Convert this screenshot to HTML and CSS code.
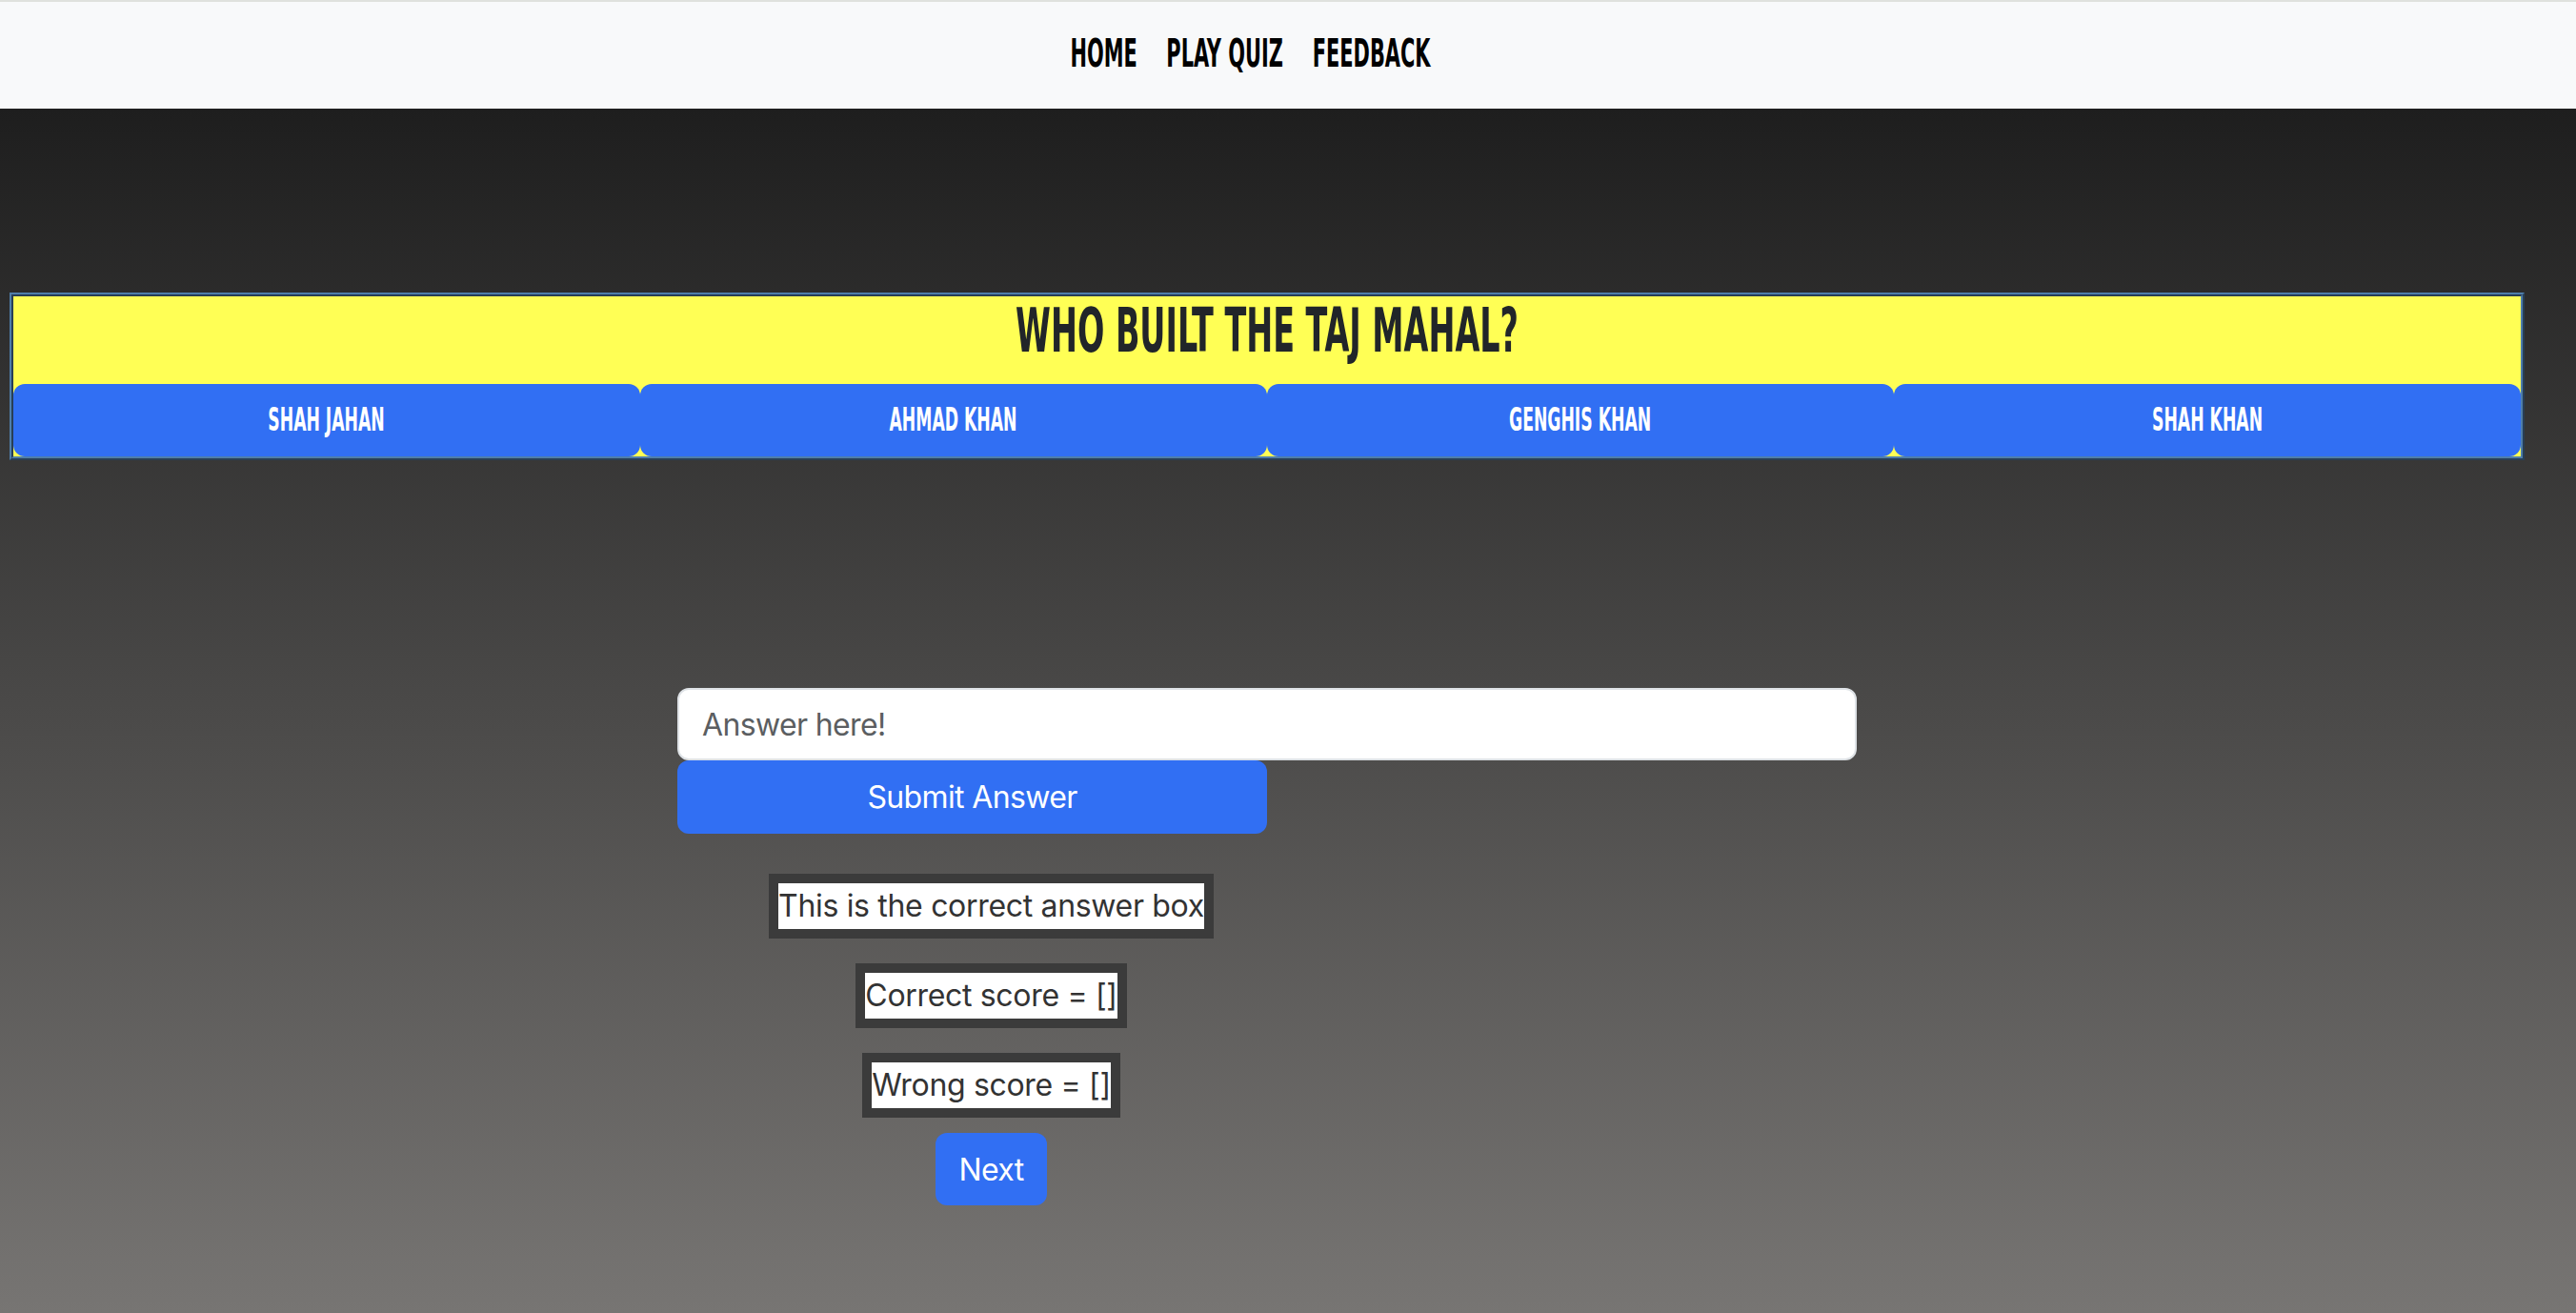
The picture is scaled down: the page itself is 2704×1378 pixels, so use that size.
FILE: index.html
```html
<!DOCTYPE html>
<html lang="en">
<head>
<meta charset="utf-8">
<title>Quiz</title>
<link rel="stylesheet" href="styles.css">
</head>
<body>
<nav class="navbar">
  <a class="nav-link nav-home" href="#"><span class="bebas">HOME</span></a>
  <a class="nav-link nav-play" href="#"><span class="bebas">PLAY QUIZ</span></a>
  <a class="nav-link nav-feedback" href="#"><span class="bebas">FEEDBACK</span></a>
</nav>
<main class="page">
  <section class="question-box">
    <h2 class="question"><span class="bebas">WHO BUILT THE TAJ MAHAL?</span></h2>
    <div class="answers">
      <button class="answer-btn"><span class="bebas">SHAH JAHAN</span></button>
      <button class="answer-btn"><span class="bebas">AHMAD KHAN</span></button>
      <button class="answer-btn"><span class="bebas">GENGHIS KHAN</span></button>
      <button class="answer-btn"><span class="bebas">SHAH KHAN</span></button>
    </div>
  </section>
  <section class="answer-form">
    <input class="answer-input" type="text" placeholder="Answer here!">
    <button class="submit-btn">Submit Answer</button>
    <div class="results">
      <div class="result-row"><span class="result-box">This is the correct answer box</span></div>
      <div class="result-row"><span class="result-box">Correct score = []</span></div>
      <div class="result-row"><span class="result-box">Wrong score = []</span></div>
      <div class="result-row"><button class="next-btn">Next</button></div>
    </div>
  </section>
</main>
</body>
</html>
```
FILE: styles.css
```css
html, body {
  margin: 0;
  padding: 0;
}
body {
  min-height: 1378px;
  background: linear-gradient(to bottom, #1d1d1d 0px, #1e1e1e 114px, #777573 1378px);
  font-family: Inter, "Noto Sans", sans-serif;
  letter-spacing: -0.02em;
  color: #212529;
}
.bebas {
  display: inline-block;
  font-family: "Liberation Sans Narrow", "DejaVu Sans Condensed", "Liberation Sans", sans-serif;
  font-weight: 700;
  letter-spacing: 0;
  white-space: nowrap;
  transform: scaleX(0.58);
  transform-origin: center;
}
.navbar {
  box-sizing: border-box;
  height: 114px;
  border-top: 2px solid #dfe1dd;
  background: #f8f9fa;
  display: flex;
  justify-content: center;
  padding-top: 35px;
  padding-right: 78px;
}
.nav-link {
  display: flex;
  justify-content: center;
  color: #000;
  text-decoration: none;
  font-size: 40px;
  line-height: 39px;
  height: 39px;
  margin: 0 17px;
}
.nav-home { width: 67px; }
.nav-play { width: 119px; }
.nav-feedback { width: 122px; }
.page {
  padding-top: 193px;
}
.question-box {
  box-sizing: border-box;
  width: 2640px;
  margin-left: 10px;
  border: 4px ridge #4f7eaa;
  background: #ffff55;
}
.question {
  box-sizing: border-box;
  height: 92px;
  margin: 0;
  padding-top: 3px;
  text-align: center;
  font-size: 64px;
  line-height: 64px;
  font-weight: 700;
  color: #212529;
}
.answers {
  display: flex;
}
.answer-btn {
  flex: 1 1 0;
  height: 76px;
  margin: 0;
  border: none;
  border-radius: 12px;
  background: #316ff3;
  color: #fff;
  font-size: 33px;
  line-height: 40px;
  display: flex;
  align-items: center;
  justify-content: center;
  padding: 0;
}
.answer-form {
  margin-left: 711px;
  margin-top: 239px;
  display: flex;
  flex-direction: column;
  align-items: flex-start;
}
.answer-input {
  box-sizing: border-box;
  width: 1238px;
  height: 76px;
  border: 2px solid #dee2e6;
  border-radius: 12px;
  background: #fff;
  padding: 0 24px;
  font-family: Inter, "Noto Sans", sans-serif;
  font-size: 32px;
  letter-spacing: -0.02em;
  color: #212529;
  outline: none;
}
.answer-input::placeholder {
  color: #5b5e61;
}
.submit-btn {
  box-sizing: border-box;
  width: 619px;
  height: 77px;
  border: none;
  border-radius: 12px;
  background: #316ff3;
  color: #fff;
  font-family: Inter, "Noto Sans", sans-serif;
  font-size: 32px;
  letter-spacing: -0.02em;
}
.results {
  width: 659px;
  margin-top: 42px;
  display: flex;
  flex-direction: column;
  align-items: center;
}
.result-row {
  display: flex;
  justify-content: center;
  margin-bottom: 26px;
}
.result-row:nth-child(3) {
  margin-bottom: 16px;
}
.result-box {
  border: 10px solid #3b3b3b;
  background: #fff;
  color: #333;
  font-size: 32px;
  line-height: 48px;
  white-space: nowrap;
}
.next-btn {
  box-sizing: border-box;
  height: 76px;
  padding: 0 24px;
  border: none;
  border-radius: 12px;
  background: #316ff3;
  color: #fff;
  font-family: Inter, "Noto Sans", sans-serif;
  font-size: 32px;
  letter-spacing: -0.02em;
}
```
